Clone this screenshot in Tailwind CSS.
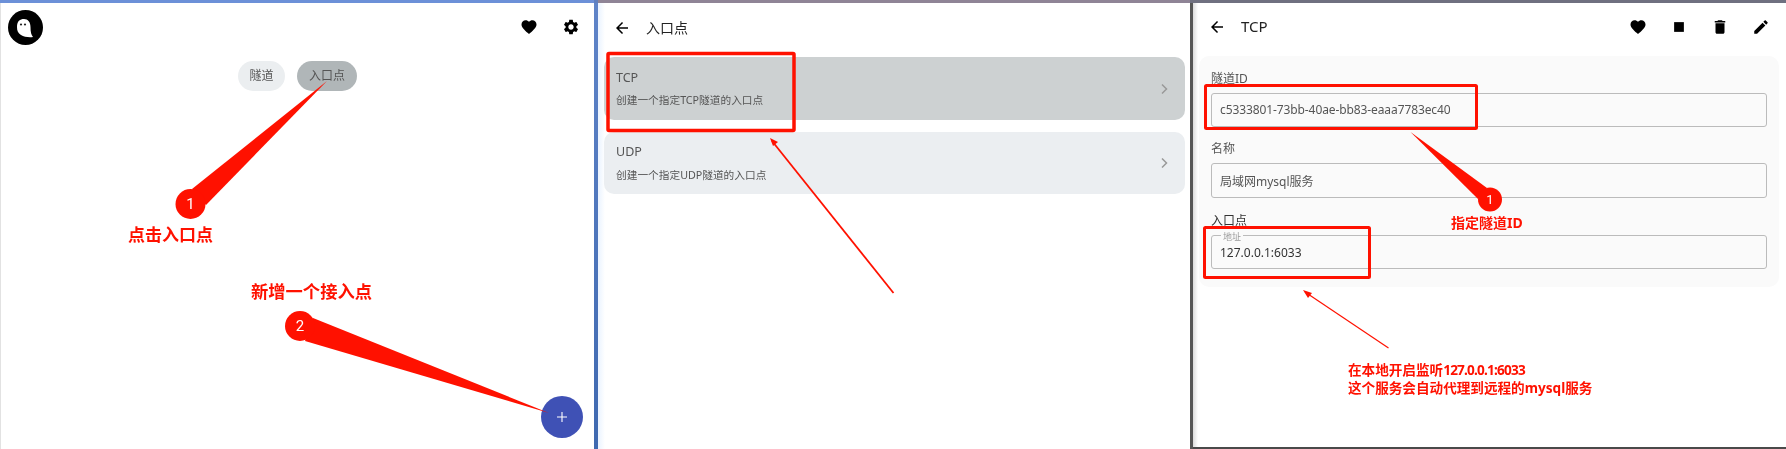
<!DOCTYPE html>
<html lang="en">
<head>
    <meta charset="UTF-8">
    <title>入口点</title>
    <script src="https://cdn.jsdelivr.net/npm/@tailwindcss/browser@4"></script>
</head>
<body class="bg-white">
<div class="relative w-[1786px] h-[449px] overflow-hidden bg-white blur-[0.4px] [font-family:'Noto_Sans','Noto_Sans_CJK_SC',sans-serif]">

    <!-- Window title strip -->
    <div class="flex h-[3px]">
        <div class="w-[594px] bg-[#6c90d8]"></div>
        <div class="w-[4px] bg-[#5f7fbe]"></div>
        <div class="w-[592px] bg-[#8f8496]"></div>
        <div class="flex-1 bg-[#6f7080]"></div>
    </div>

    <div class="flex h-[446px]">
        <!-- Panel 1: home -->
        <section class="relative w-[594px] border-l border-[#e2e2e2]">
            <header class="flex items-center justify-between h-[48px] pl-[7px] pr-[14px]">
                <svg class="w-[35px] h-[35px]" viewBox="0 0 35 35">
                    <circle cx="17.5" cy="17.5" r="17.5" fill="#000"/>
                    <path d="M9 17c0-6 3-8 7-8s6.500 3 6.500 8c0 5 .8 8 2.500 10-4 .5-9 0-12-2-3-2-4-4-4-8z" fill="#fff"/>
                    <circle cx="13" cy="14.500" r="1.100" fill="#222"/>
                    <circle cx="17" cy="14.500" r="1.100" fill="#222"/>
                </svg>
                <div class="flex items-center gap-[24px]">
                    <svg class="w-[18px] h-[18px]" viewBox="0 0 24 24"><path d="M12 21.350l-1.450-1.320C5.400 15.360 2 12.280 2 8.500 2 5.420 4.420 3 7.500 3c1.740 0 3.410.81 4.500 2.090C13.090 3.810 14.760 3 16.500 3 19.580 3 22 5.420 22 8.500c0 3.780-3.400 6.860-8.550 11.540L12 21.350z"/></svg>
                    <svg class="w-[18px] h-[18px]" viewBox="0 0 24 24"><path d="M19.140 12.940c.04-.3.060-.61.060-.94 0-.32-.02-.64-.07-.94l2.030-1.580c.18-.14.230-.41.120-.61l-1.920-3.320c-.12-.22-.37-.29-.59-.22l-2.390.96c-.5-.38-1.030-.7-1.620-.94l-.36-2.540c-.04-.24-.24-.41-.48-.41h-3.840c-.24 0-.43.17-.47.41l-.36 2.540c-.59.24-1.130.57-1.620.94l-2.390-.96c-.22-.08-.47 0-.59.22L2.740 8.870c-.12.21-.08.47.12.61l2.030 1.580c-.05.3-.09.63-.09.94s.02.64.07.94l-2.030 1.580c-.18.14-.23.41-.12.61l1.920 3.320c.12.22.37.29.59.22l2.390-.96c.5.38 1.030.7 1.620.94l.36 2.540c.05.24.24.41.48.41h3.840c.24 0 .44-.17.47-.41l.36-2.540c.59-.24 1.130-.56 1.620-.94l2.390.96c.22.08.47 0 .59-.22l1.920-3.320c.12-.22.07-.47-.12-.61l-2.010-1.580zM12 15.600c-1.980 0-3.600-1.620-3.600-3.600s1.620-3.600 3.600-3.600 3.600 1.620 3.600 3.600-1.620 3.600-3.600 3.600z"/></svg>
                </div>
            </header>
            <div class="flex justify-center gap-[12px] mt-[10px] text-[12px] text-[#555]">
                <span class="flex items-center justify-center w-[47px] h-[30px] rounded-full bg-[#ebeef0]">隧道</span>
                <span class="flex items-center justify-center w-[60px] h-[30px] rounded-full bg-[#b0b6b8]">入口点</span>
            </div>
            <button class="absolute left-[540px] top-[393px] flex items-center justify-center w-[42px] h-[42px] rounded-full bg-[#3f51b5]">
                <svg class="w-[14px] h-[14px]" viewBox="0 0 14 14"><path d="M7 2v10M2 7h10" stroke="#fff" stroke-width="1.100"/></svg>
            </button>
        </section>
        <div class="w-[4px] bg-linear-to-b from-[#5f84c8] to-[#3f69b0]"></div>

        <!-- Panel 2: entry point types -->
        <section class="w-[592px] bg-linear-to-r from-[#eaf3ff] to-white to-[7px]">
            <header class="flex items-center gap-[15px] h-[49px] pl-[15px] text-[14px] text-[#222]">
                <svg class="w-[18px] h-[18px]" viewBox="0 0 24 24"><path d="M20 11H7.830l5.590-5.590L12 4l-8 8 8 8 1.410-1.410L7.830 13H20v-2z"/></svg>
                <span>入口点</span>
            </header>
            <div class="flex flex-col gap-[12px] mt-[5px] ml-[6px] mr-[5px] text-[#555]">
                <div class="flex items-center justify-between h-[63px] pl-[12px] pr-[14px] rounded-[10px] bg-[#cdd1d2]">
                    <div class="flex flex-col gap-[6px] pt-[1px]">
                        <span class="text-[12.500px] leading-[16px]">TCP</span>
                        <span class="text-[10.700px] leading-[16px]">创建一个指定TCP隧道的入口点</span>
                    </div>
                    <svg class="w-[14px] h-[14px]" viewBox="0 0 14 14" fill="none"><path d="M5 2.500 9.500 7 5 11.500" stroke="#999" stroke-width="1.500"/></svg>
                </div>
                <div class="flex items-center justify-between h-[62px] pl-[12px] pr-[14px] rounded-[10px] bg-[#ebeef1]">
                    <div class="flex flex-col gap-[7px]">
                        <span class="text-[12.500px] leading-[16px]">UDP</span>
                        <span class="text-[10.700px] leading-[16px]">创建一个指定UDP隧道的入口点</span>
                    </div>
                    <svg class="w-[14px] h-[14px]" viewBox="0 0 14 14" fill="none"><path d="M5 2.500 9.500 7 5 11.500" stroke="#999" stroke-width="1.500"/></svg>
                </div>
            </div>
        </section>
        <div class="w-[3px] bg-[#565656]"></div>

        <!-- Panel 3: TCP form -->
        <section class="flex-1 border-b-2 border-[#4a4a4a] bg-linear-to-r from-[#dcdcdc] to-white to-[5px]">
            <header class="flex items-center h-[47px] pl-[15px] pr-[16px] text-[15px] text-[#222]">
                <svg class="w-[18px] h-[18px] mr-[15px]" viewBox="0 0 24 24"><path d="M20 11H7.830l5.590-5.590L12 4l-8 8 8 8 1.410-1.410L7.830 13H20v-2z"/></svg>
                <span>TCP</span>
                <div class="flex items-center gap-[23px] ml-auto">
                    <svg class="w-[18px] h-[18px]" viewBox="0 0 24 24"><path d="M12 21.350l-1.450-1.320C5.400 15.360 2 12.280 2 8.500 2 5.420 4.420 3 7.500 3c1.740 0 3.410.81 4.500 2.090C13.090 3.810 14.760 3 16.500 3 19.580 3 22 5.420 22 8.500c0 3.780-3.400 6.860-8.550 11.540L12 21.350z"/></svg>
                    <svg class="w-[18px] h-[18px]" viewBox="0 0 24 24"><path d="M5.500 5.500h13v13h-13z"/></svg>
                    <svg class="w-[18px] h-[18px]" viewBox="0 0 24 24"><path d="M6 19c0 1.100.9 2 2 2h8c1.100 0 2-.9 2-2V7H6v12zM19 4h-3.500l-1-1h-5l-1 1H5v2h14V4z"/></svg>
                    <svg class="w-[18px] h-[18px]" viewBox="0 0 24 24"><path d="M3 17.250V21h3.750L17.810 9.940l-3.750-3.750L3 17.250zM20.710 7.040c.39-.39.39-1.020 0-1.410l-2.340-2.340c-.39-.39-1.020-.39-1.410 0l-1.830 1.830 3.750 3.750 1.830-1.830z"/></svg>
                </div>
            </header>
            <form class="h-[231px] mt-[6px] ml-[6px] mr-[7px] pt-[12px] px-[12px] rounded-[10px] bg-[#fafafa] text-[12px] text-[#555]">
                <label class="block h-[20px] mb-[5px] leading-[22px]">隧道ID</label>
                <div class="flex items-center h-[34px] px-[8px] rounded-[3px] border border-[#bbb] tracking-[-0.1px]">c5333801-73bb-40ae-bb83-eaaa7783ec40</div>
                <label class="block h-[20px] mt-[11px] mb-[5px] leading-[22px]">名称</label>
                <div class="flex items-center h-[35px] pt-[2px] px-[8px] rounded-[3px] border border-[#bbb]">局域网mysql服务</div>
                <label class="block h-[20px] mt-[12px] mb-[5px] leading-[22px] text-[#333]">入口点</label>
                <div class="relative flex items-center h-[34px] pt-[2px] px-[8px] rounded-[3px] border border-[#bbb] text-[#333]">
                    <span class="absolute left-[9px] -top-[5px] px-[2px] bg-[#fafafa] text-[9px] leading-[12px] text-[#999]">地址</span>
                    127.0.0.1:6033
                </div>
            </form>
        </section>
    </div>

    <!-- Red annotations drawn over the screenshots -->
    <svg class="absolute inset-0" width="1786" height="449" viewBox="0 0 1786 449">
        <g fill="#ff1100">
            <polygon points="327,81 192,189 206,205"/>
            <circle cx="190.500" cy="204" r="15"/>
            <polygon points="549,413 313,318 305,341"/>
            <circle cx="300" cy="326" r="15"/>
            <polygon points="1410.500,132 1487,188 1478,199"/>
            <circle cx="1490" cy="199.500" r="12"/>
            <polygon points="770,138 778,142 773,146"/>
            <polygon points="1303,290 1312,293 1308,298"/>
        </g>
        <g fill="none" stroke="#ff1100">
            <rect x="608" y="53.500" width="186" height="77" stroke-width="3.500" rx="1"/>
            <rect x="1205.500" y="85.500" width="271" height="43" stroke-width="3" rx="1"/>
            <rect x="1204.500" y="227.500" width="165" height="50" stroke-width="3" rx="1"/>
            <path d="M893.500 293 772 141" stroke-width="1.800"/>
            <path d="M1388.500 348 1305 292" stroke-width="1.200"/>
        </g>
        <g fill="#fff" font-family="Roboto, sans-serif" text-anchor="middle">
            <text x="190.500" y="209" font-size="15">1</text>
            <text x="300" y="331" font-size="15">2</text>
            <text x="1490" y="204" font-size="13">1</text>
        </g>
    </svg>
    <span class="absolute left-[128px] top-[223px] text-[17px] leading-[24px] font-bold text-[#ff1100]">点击入口点</span>
    <span class="absolute left-[251px] top-[280px] text-[17.300px] leading-[24px] font-bold text-[#ff1100]">新增一个接入点</span>
    <span class="absolute left-[1451px] top-[213px] text-[14px] leading-[20px] font-bold text-[#ff1100]">指定隧道ID</span>
    <div class="absolute left-[1348px] top-[361px] text-[13.600px] leading-[18px] font-bold text-[#ff1100]">
        <p>在本地开启监听<span class="tracking-[-0.8px]">127.0.0.1:6033</span></p>
        <p>这个服务会自动代理到远程的mysql服务</p>
    </div>
</div>
</body>
</html>
